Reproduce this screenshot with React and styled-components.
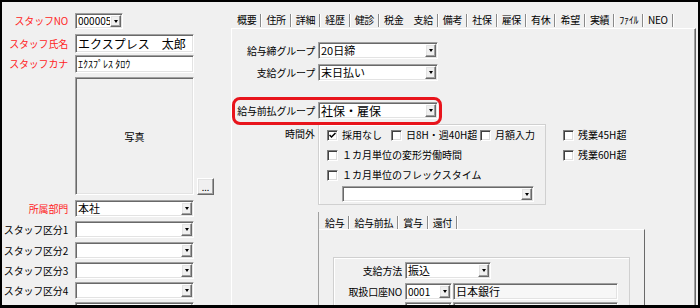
import styled, { createGlobalStyle, css } from "styled-components";

const GlobalStyle = createGlobalStyle`
  html, body {
    margin: 0;
    padding: 0;
    background: #fff;
  }
`;

const sunken = css`
  box-sizing: border-box;
  border: 1px solid;
  border-color: #a0a0a0 #fff #fff #a0a0a0;
  box-shadow: inset 1px 1px 0 #696969, inset -1px -1px 0 #e3e3e3;
`;

const raised = css`
  box-sizing: border-box;
  border: 1px solid;
  border-color: #fff #696969 #696969 #fff;
  box-shadow: inset -1px -1px 0 #a0a0a0, inset 1px 1px 0 #e3e3e3;
  background: #f0f0f0;
`;

const Frame = styled.div`
  width: 700px;
  height: 308px;
  box-sizing: border-box;
  border: 2px solid #000;
  border-bottom-width: 3px;
  background: #f0f0f0;
  overflow: hidden;
  display: flex;
  font-family: "Noto Sans CJK JP", "Noto Sans", sans-serif;
  font-size: 10px;
  color: #000;
`;

/* ---------- left: staff panel ---------- */

const LeftPanel = styled.div`
  width: 229px;
  flex: none;
  display: flex;
  flex-direction: column;
`;

const FieldRow = styled.div`
  display: grid;
  grid-template-columns: 66px auto;
  column-gap: 7px;
  align-items: center;
  margin-top: ${(p) => p.$mt}px;
`;

const Label = styled.span`
  text-align: right;
  white-space: nowrap;
  font-size: 10px;
  line-height: 12px;
  letter-spacing: -0.2px;
  color: ${(p) => (p.$req ? "#ff2424" : "#000")};
`;

const TextBox = styled.div`
  ${sunken}
  width: ${(p) => p.$w}px;
  height: ${(p) => p.$h || 17}px;
  background: ${(p) => (p.$disabled ? "#f7f7f7" : "#fff")};
  padding: 0 2px;
  display: flex;
  align-items: center;
  font-size: ${(p) => p.$fs || 11}px;
  line-height: 1;
  white-space: nowrap;
`;

const ComboFrame = styled.div`
  ${sunken}
  display: flex;
  width: ${(p) => p.$w}px;
  height: ${(p) => p.$h || 17}px;
  background: #fff;
  padding: 1px;
  flex: none;
`;

const ComboValue = styled.div`
  flex: 1;
  min-width: 0;
  display: flex;
  align-items: center;
  padding-left: 1px;
  font-size: ${(p) => p.$fs || 11}px;
  line-height: 1;
  white-space: nowrap;
`;

const DropButton = styled.div`
  ${raised}
  width: 11px;
  flex: none;
  display: flex;
  align-items: center;
  justify-content: center;

  &::after {
    content: "";
    width: 0;
    height: 0;
    border-left: 2.5px solid transparent;
    border-right: 2.5px solid transparent;
    border-top: 3px solid #000;
  }
`;

const Caret = styled.span`
  width: 1px;
  height: 11px;
  background: #000;
  margin-left: -1px;
`;

const PhotoCell = styled.div`
  display: flex;
  align-items: flex-end;
  gap: 3px;
`;

const PhotoBox = styled.div`
  ${sunken}
  width: 119px;
  height: 118px;
  display: flex;
  align-items: center;
  justify-content: center;
  font-size: 10px;
`;

const DotsButton = styled.div`
  ${raised}
  width: 17px;
  height: 17px;
  display: flex;
  align-items: center;
  justify-content: center;
  font-size: 9px;
  line-height: 1;
  padding-top: 2px;
`;

/* ---------- right: tabbed details ---------- */

const RightPanel = styled.div`
  flex: 1;
  min-width: 0;
  display: flex;
  flex-direction: column;
`;

const TabStrip = styled.div`
  display: flex;
  align-items: center;
  height: 16px;
  margin-top: 10px;
  padding-left: 2px;
`;

const Tab = styled.span`
  padding: 0 4px;
  font-size: 10px;
  letter-spacing: -0.3px;
  line-height: 12px;
  white-space: nowrap;
`;

const TabSep = styled.span`
  width: 0;
  height: 13px;
  border-left: 1px solid ${(p) => (p.$hidden ? "transparent" : "#8a8a8a")};
  border-right: 1px solid ${(p) => (p.$hidden ? "transparent" : "#fff")};
`;

const TabBody = styled.div`
  flex: 1;
  min-height: 0;
  margin-right: 2px;
  border-top: 1px solid #fff;
  border-left: 1px solid #fff;
  border-right: 1px solid #696969;
  box-shadow: inset -1px 0 0 #a0a0a0;
  padding-top: 13px;
  display: flex;
  flex-direction: column;
`;

const FormRow = styled.div`
  position: relative;
  display: grid;
  grid-template-columns: ${(p) => p.$lw || 83}px auto;
  column-gap: 3px;
  align-items: center;
  width: max-content;
  margin-top: ${(p) => p.$mt || 0}px;
`;

const Highlight = styled.div`
  position: absolute;
  top: -5px;
  bottom: -6px;
  left: 0;
  right: -4px;
  border: 3px solid #e8141c;
  border-radius: 8px;
  pointer-events: none;
`;

const OvertimeBlock = styled.div`
  display: flex;
  align-items: flex-start;
  margin-top: 5px;
`;

const OvertimeLabel = styled.span`
  width: 83px;
  margin-right: 3px;
  padding-top: 4px;
  text-align: right;
  line-height: 12px;
  flex: none;
`;

const GroupBox = styled.div`
  width: 228px;
  height: 81px;
  box-sizing: border-box;
  flex: none;
  border: 1px solid #d0d0d0;
  box-shadow: inset 1px 1px 0 #fff;
  padding-left: 8px;
  display: flex;
  flex-direction: column;
`;

const CheckColumn = styled.div`
  display: flex;
  flex-direction: column;
  margin-left: 17px;
  padding-top: 1px;
`;

const CheckRow = styled.div`
  display: flex;
  align-items: center;
  height: 20px;
`;

const CheckItem = styled.label`
  display: flex;
  align-items: center;
  gap: 4px;
  width: ${(p) => (p.$w ? `${p.$w}px` : "auto")};
  white-space: nowrap;
  line-height: 12px;
`;

const Box = styled.span`
  width: 11px;
  height: 11px;
  box-sizing: border-box;
  flex: none;
  background: #fff;
  border: 1px solid;
  border-color: #808080 #fff #fff #808080;
  box-shadow: inset 1px 1px 0 #404040, inset -1px -1px 0 #dcdcdc;
  display: flex;
  align-items: center;
  justify-content: center;
`;

const GroupCombo = styled.div`
  margin: 1px 0 0 15px;
`;

const SubTabs = styled.div`
  flex: 1;
  min-height: 0;
  width: 327px;
  margin: 7px 0 0 86px;
  box-sizing: border-box;
  border-left: 1px solid #a0a0a0;
  display: flex;
  flex-direction: column;
`;

const SubStrip = styled.div`
  display: flex;
  align-items: center;
  height: 20px;
  padding: 4px 0 0 2px;
  box-sizing: border-box;
`;

const SubBody = styled.div`
  flex: 1;
  border-top: 1px solid #fff;
  border-right: 1px solid #696969;
  padding: 27px 0 0 14px;
  display: flex;
`;

const InnerGroup = styled.div`
  width: 297px;
  box-sizing: border-box;
  border: 1px solid #d0d0d0;
  border-bottom: none;
  box-shadow: inset 1px 1px 0 #fff;
  padding-top: 4px;
  display: flex;
  flex-direction: column;
`;

const FieldPair = styled.div`
  display: flex;
  gap: 1px;
`;

function Combo({ w, h, fs, children }) {
  return (
    <ComboFrame $w={w} $h={h}>
      <ComboValue $fs={fs}>{children}</ComboValue>
      <DropButton />
    </ComboFrame>
  );
}

function Check({ checked, w, children }) {
  return (
    <CheckItem $w={w}>
      <Box>
        {checked && (
          <svg width="7" height="7" viewBox="0 0 7 7">
            <polyline points="0.5,3 2.5,5 6.5,1" fill="none" stroke="#000" strokeWidth="1.5" />
          </svg>
        )}
      </Box>
      {children}
    </CheckItem>
  );
}

const mainTabs = ["概要", "住所", "詳細", "経歴", "健診", "税金", "支給", "備考", "社保", "雇保", "有休", "希望", "実績", "ﾌｧｲﾙ", "NEO"];
const subTabs = ["給与", "給与前払", "賞与", "還付"];

export default function App() {
  return (
    <>
      <GlobalStyle />
      <Frame>
        <LeftPanel>
          <FieldRow $mt={11}>
            <Label $req>スタッフNO</Label>
            <Combo w={48} h={16} fs={10}>
              000005
              <Caret />
            </Combo>
          </FieldRow>
          <FieldRow $mt={5}>
            <Label $req>スタッフ氏名</Label>
            <TextBox $w={119} $h={19} $fs={12}>エクスプレス　太郎</TextBox>
          </FieldRow>
          <FieldRow $mt={2}>
            <Label $req>スタッフカナ</Label>
            <TextBox $w={119} $h={18} $fs={10}>ｴｸｽﾌﾟﾚｽ ﾀﾛｳ</TextBox>
          </FieldRow>
          <FieldRow $mt={4}>
            <span />
            <PhotoCell>
              <PhotoBox>写真</PhotoBox>
              <DotsButton>...</DotsButton>
            </PhotoCell>
          </FieldRow>
          <FieldRow $mt={5}>
            <Label $req>所属部門</Label>
            <Combo w={119}>本社</Combo>
          </FieldRow>
          {[1, 2, 3, 4, 5].map((n, i) => (
            <FieldRow key={n} $mt={i < 2 ? 4 : 3}>
              <Label>スタッフ区分{n}</Label>
              <Combo w={119} />
            </FieldRow>
          ))}
        </LeftPanel>

        <RightPanel>
          <TabStrip>
            {mainTabs.map((t, i) => (
              <span key={t} style={{ display: "contents" }}>
                {i > 0 && <TabSep $hidden={t === "支給"} />}
                <Tab>{t}</Tab>
              </span>
            ))}
            <TabSep />
          </TabStrip>
          <TabBody>
            <FormRow>
              <Label>給与締グループ</Label>
              <Combo w={120}>20日締</Combo>
            </FormRow>
            <FormRow $mt={5}>
              <Label>支給グループ</Label>
              <Combo w={120}>末日払い</Combo>
            </FormRow>
            <FormRow $mt={21}>
              <Label>給与前払グループ</Label>
              <Combo w={120} fs={12}>社保・雇保</Combo>
              <Highlight />
            </FormRow>

            <OvertimeBlock>
              <OvertimeLabel>時間外</OvertimeLabel>
              <GroupBox>
                <CheckRow>
                  <Check checked w={64}>採用なし</Check>
                  <Check w={89}>日8H・週40H超</Check>
                  <Check>月額入力</Check>
                </CheckRow>
                <CheckRow>
                  <Check>１カ月単位の変形労働時間</Check>
                </CheckRow>
                <CheckRow>
                  <Check>１カ月単位のフレックスタイム</Check>
                </CheckRow>
                <GroupCombo>
                  <Combo w={192} h={16} />
                </GroupCombo>
              </GroupBox>
              <CheckColumn>
                <CheckRow>
                  <Check>残業45H超</Check>
                </CheckRow>
                <CheckRow>
                  <Check>残業60H超</Check>
                </CheckRow>
              </CheckColumn>
            </OvertimeBlock>

            <SubTabs>
              <SubStrip>
                {subTabs.map((t) => (
                  <span key={t} style={{ display: "contents" }}>
                    <Tab>{t}</Tab>
                    <TabSep />
                  </span>
                ))}
              </SubStrip>
              <SubBody>
                <InnerGroup>
                  <FormRow $lw={68}>
                    <Label>支給方法</Label>
                    <Combo w={86}>振込</Combo>
                  </FormRow>
                  <FormRow $lw={68} $mt={4}>
                    <Label>取扱口座NO</Label>
                    <FieldPair>
                      <Combo w={47} fs={10}>0001</Combo>
                      <TextBox $w={165} $disabled>日本銀行</TextBox>
                    </FieldPair>
                  </FormRow>
                  <FormRow $lw={68} $mt={2}>
                    <span />
                    <FieldPair>
                      <Combo w={47} />
                      <TextBox $w={165} $disabled />
                    </FieldPair>
                  </FormRow>
                </InnerGroup>
              </SubBody>
            </SubTabs>
          </TabBody>
        </RightPanel>
      </Frame>
    </>
  );
}
